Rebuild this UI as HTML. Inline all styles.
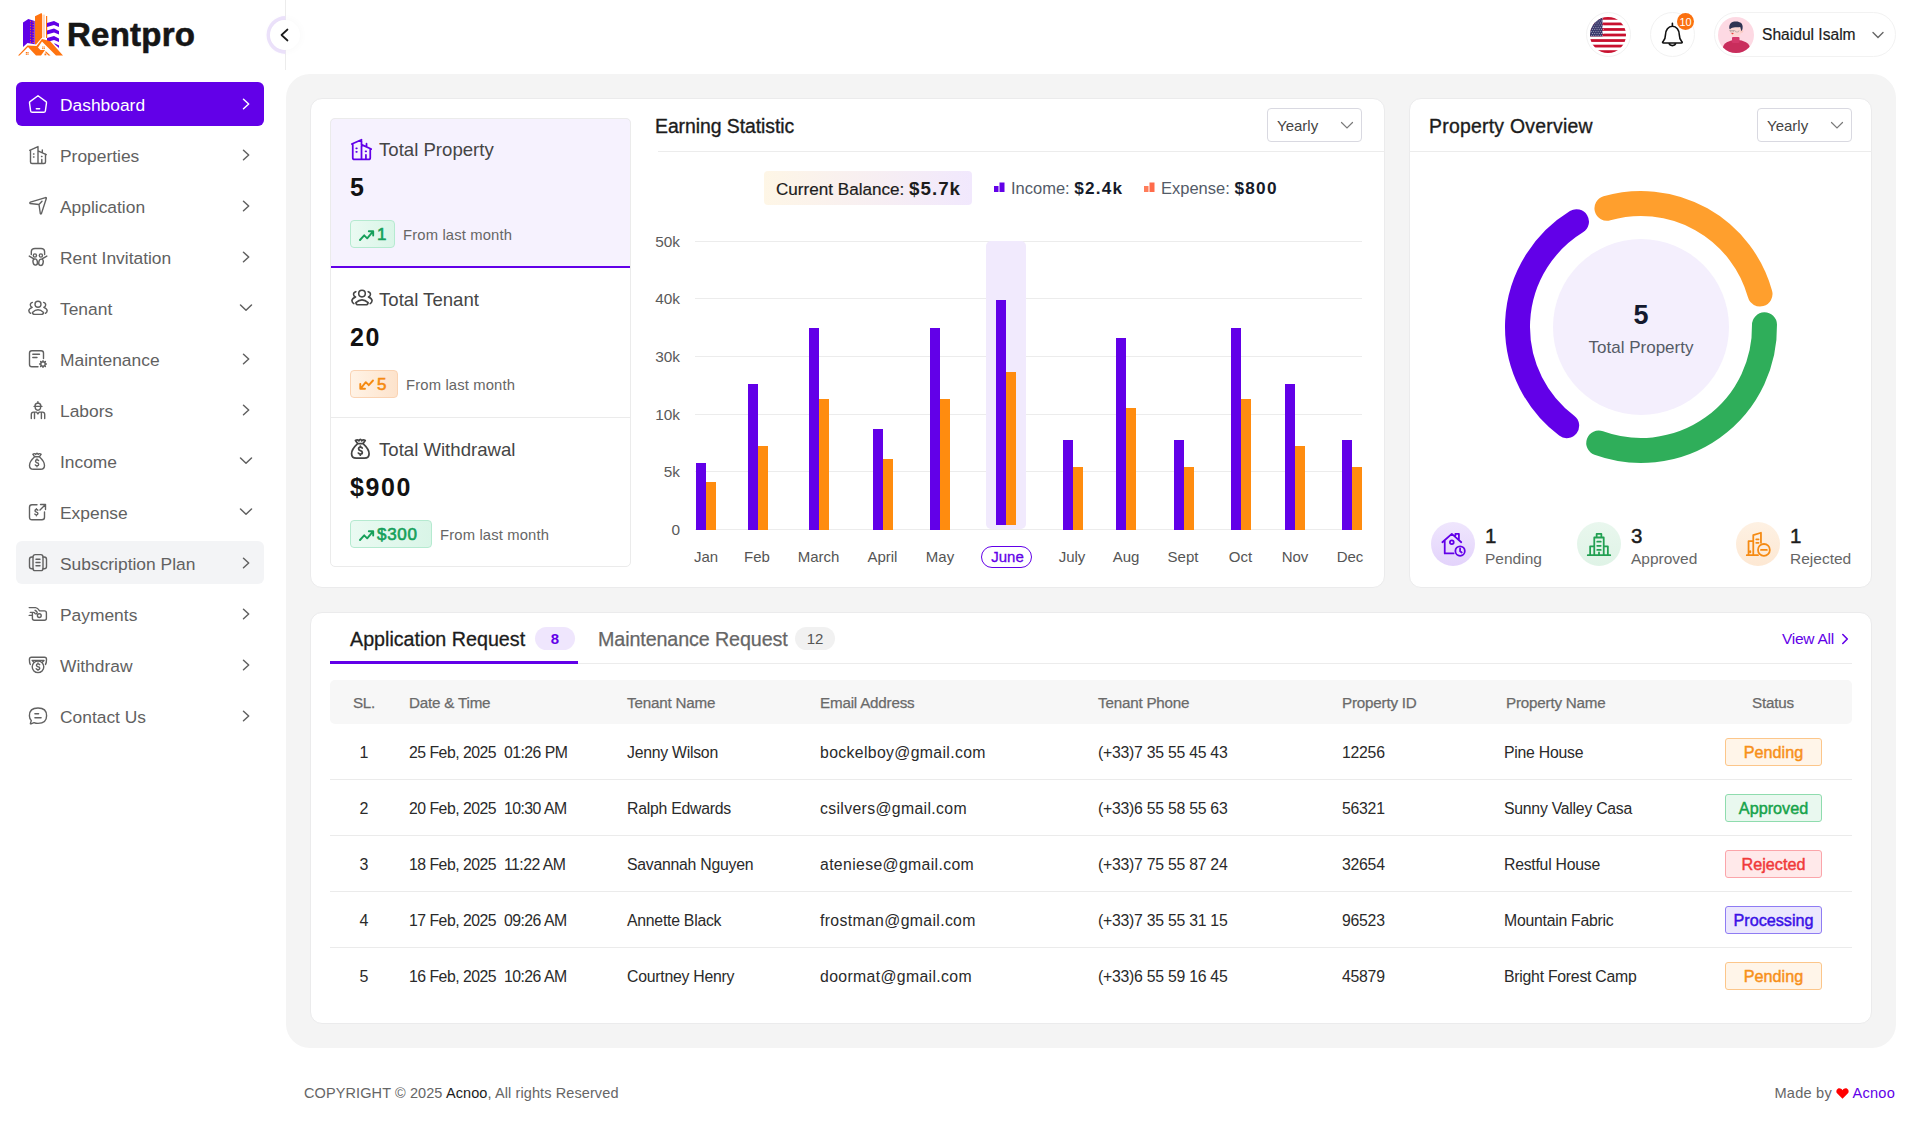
<!DOCTYPE html>
<html><head><meta charset="utf-8">
<style>
*{box-sizing:border-box;margin:0;padding:0}
html,body{width:1920px;height:1129px;overflow:hidden;background:#fff;font-family:"Liberation Sans",sans-serif;color:#1c1c1c;position:relative}
.a{position:absolute}
svg{display:block;overflow:visible}
</style></head><body>

<svg class="a" style="left:10px;top:5px;" width="60" height="60" viewBox="0 0 60 60">
  <polygon fill="#6000e6" points="13,17.5 18.3,14.1 24.7,15.9 24.7,39.3 17.5,38 13,42"/>
  <polygon fill="#ff7410" points="25,11.3 31.5,8 32,8.5 32,32.5 26,39.5 25,39.3"/>
  <rect fill="#ffd8bd" x="32.3" y="9.6" width="2.6" height="23"/>
  <rect fill="#ff7410" x="36" y="11" width="1.2" height="22"/>
  <polygon fill="#6000e6" points="37,18 44,16 49,18.5 49,22 44,20 37,22"/>
  <polygon fill="#6000e6" points="37,25.5 44,23.5 49,26 49,29.5 44,27.5 37,29.5"/>
  <polygon fill="#6000e6" points="37,33 44,31 49,33.5 49,37 44,35 37,37"/>
  <polygon fill="#6000e6" points="44,38 49,40.5 49,43 45,39.5"/>
  <polygon fill="#ff7410" points="8,50.5 17.5,40.5 26.5,41 32,34 40,36 53,50.5 46,50.5 32,36.5 28,42.5 30.5,45 35,45 31,50.5 26,50.5 18,42 9.5,50.5"/>
  <polygon fill="#ff7410" points="35.5,46 40.5,50.5 38.5,50.5 35.5,47.5"/>
  <circle cx="20.5" cy="16.50" r="0.55" fill="#ff7410"/><rect x="22.6" y="16.60" width="1.4" height="0.9" fill="#ff7410"/><circle cx="20.5" cy="19.05" r="0.55" fill="#ff7410"/><rect x="22.6" y="19.15" width="1.4" height="0.9" fill="#ff7410"/><circle cx="20.5" cy="21.60" r="0.55" fill="#ff7410"/><rect x="22.6" y="21.70" width="1.4" height="0.9" fill="#ff7410"/><circle cx="20.5" cy="24.15" r="0.55" fill="#ff7410"/><rect x="22.6" y="24.25" width="1.4" height="0.9" fill="#ff7410"/><circle cx="20.5" cy="26.70" r="0.55" fill="#ff7410"/><rect x="22.6" y="26.80" width="1.4" height="0.9" fill="#ff7410"/><circle cx="20.5" cy="29.25" r="0.55" fill="#ff7410"/><rect x="22.6" y="29.35" width="1.4" height="0.9" fill="#ff7410"/><circle cx="20.5" cy="31.80" r="0.55" fill="#ff7410"/><rect x="22.6" y="31.90" width="1.4" height="0.9" fill="#ff7410"/><circle cx="20.5" cy="34.35" r="0.55" fill="#ff7410"/><rect x="22.6" y="34.45" width="1.4" height="0.9" fill="#ff7410"/><circle cx="20.5" cy="36.90" r="0.55" fill="#ff7410"/><rect x="22.6" y="37.00" width="1.4" height="0.9" fill="#ff7410"/>
  <g fill="#ff7410"><rect x="15.8" y="47" width="1.2" height="1.2"/><rect x="17.4" y="47" width="1.2" height="1.2"/><rect x="15.8" y="48.6" width="1.2" height="1.2"/><rect x="17.4" y="48.6" width="1.2" height="1.2"/>
  <rect x="32.2" y="41.5" width="1.1" height="1.1"/><rect x="33.7" y="41.5" width="1.1" height="1.1"/><rect x="32.2" y="43" width="1.1" height="1.1"/><rect x="33.7" y="43" width="1.1" height="1.1"/>
  <rect x="34.5" y="48.5" width="1.8" height="1.8"/></g>
</svg>
<div class="a" style="left:67px;top:15.0px;line-height:40px;font-size:33px;color:#161616;font-weight:bold;white-space:nowrap;letter-spacing:0.25px;-webkit-text-stroke:0.6px #161616">Rentpro</div>
<div class="a" style="left:285px;top:0px;width:1px;height:70px;background:#ececec"></div>
<svg class="a" style="left:260px;top:10px;" width="50" height="50" viewBox="0 0 50 50"><path d="M25.5 6 A19 19 0 0 0 25.5 44 V40 A15 15 0 0 1 25.5 10 Z" fill="#ede3fc"/></svg>
<div class="a" style="left:270px;top:20px;width:30px;height:30px;border-radius:50%;background:#fff;box-shadow:0 0 10px rgba(0,0,0,0.035)"></div>
<svg class="a" style="left:277px;top:27px;" width="16" height="16" viewBox="0 0 16 16"><path d="M10.5 2.5 L4.5 8 L10.5 13.5" fill="none" stroke="#1a1a1a" stroke-width="1.7" stroke-linecap="round" stroke-linejoin="round"/></svg>
<div class="a" style="left:16px;top:82px;width:248px;height:44px;background:#6200e8;border-radius:6px"></div>
<svg class="a" style="left:29px;top:95px;" width="18" height="18" viewBox="0 0 18 18"><g fill="none" stroke="#fff" stroke-width="1.4" stroke-linecap="round" stroke-linejoin="round"><path d="M9 0.8 L17 6.6 Q17.6 7.1 17.5 7.8 L16.4 15.8 Q16.2 17.3 14.7 17.3 H3.3 Q1.8 17.3 1.6 15.8 L0.5 7.8 Q0.4 7.1 1 6.6 Z M7.3 13.8 H10.7"/></g></svg>
<div class="a" style="left:60px;top:92.5px;line-height:24px;font-size:17.4px;color:#fff;font-weight:normal;white-space:nowrap;letter-spacing:0px">Dashboard</div>
<svg class="a" style="left:240px;top:97px;" width="12" height="14" viewBox="0 0 12 14"><path d="M3.5 2.3 L8.7 7 L3.5 11.7" fill="none" stroke="#fff" stroke-width="1.5" stroke-linecap="round" stroke-linejoin="round"/></svg>
<svg class="a" style="left:29px;top:146px;" width="18" height="18" viewBox="0 0 18 18"><g fill="none" stroke="#616161" stroke-width="1.4" stroke-linecap="round" stroke-linejoin="round"><path d="M0.7 4.3 L9 0.6 M1.5 4.2 V16 Q1.5 17.5 3 17.5 H15 Q16.5 17.5 16.5 16 V8.2 M9 1.2 V17.5 M9 4.8 L17.3 8.6 M13.3 4 V6.4 M4.5 8 H5 M4.5 11 H5 M12.5 10.5 H13 M12.8 13.5 V17.5"/></g></svg>
<div class="a" style="left:60px;top:143.5px;line-height:24px;font-size:17.4px;color:#616161;font-weight:normal;white-space:nowrap;letter-spacing:0px">Properties</div>
<svg class="a" style="left:240px;top:148px;" width="12" height="14" viewBox="0 0 12 14"><path d="M3.5 2.3 L8.7 7 L3.5 11.7" fill="none" stroke="#616161" stroke-width="1.5" stroke-linecap="round" stroke-linejoin="round"/></svg>
<svg class="a" style="left:29px;top:197px;" width="18" height="18" viewBox="0 0 18 18"><g fill="none" stroke="#616161" stroke-width="1.4" stroke-linecap="round" stroke-linejoin="round"><path d="M1 6.5 Q0.5 5.6 1.4 5.2 L16.5 0.6 Q17.6 0.4 17.3 1.5 L12.5 16.4 Q12 17.4 11.3 16.5 L10 7.5 Z M10 7.5 L13 4.3"/></g></svg>
<div class="a" style="left:60px;top:194.5px;line-height:24px;font-size:17.4px;color:#616161;font-weight:normal;white-space:nowrap;letter-spacing:0px">Application</div>
<svg class="a" style="left:240px;top:199px;" width="12" height="14" viewBox="0 0 12 14"><path d="M3.5 2.3 L8.7 7 L3.5 11.7" fill="none" stroke="#616161" stroke-width="1.5" stroke-linecap="round" stroke-linejoin="round"/></svg>
<svg class="a" style="left:29px;top:248px;" width="18" height="18" viewBox="0 0 18 18"><g fill="none" stroke="#616161" stroke-width="1.4" stroke-linecap="round" stroke-linejoin="round"><path d="M2.3 6.6 V3.6 Q2.5 0.5 6 0.5 H12 Q15.4 0.5 15.6 3.6 V6.6 M0.3 8.1 L4.4 10.7 M17.8 8.1 L13.5 10.6"/><circle cx="5.9" cy="7.5" r="1.6"/><circle cx="11.9" cy="7.5" r="1.6"/><ellipse cx="6.2" cy="14" rx="2.2" ry="3.1" transform="rotate(-12 6.2 14)"/><ellipse cx="12" cy="14.3" rx="2.2" ry="3.2" transform="rotate(12 12 14.3)"/></g></svg>
<div class="a" style="left:60px;top:245.5px;line-height:24px;font-size:17.4px;color:#616161;font-weight:normal;white-space:nowrap;letter-spacing:0px">Rent Invitation</div>
<svg class="a" style="left:240px;top:250px;" width="12" height="14" viewBox="0 0 12 14"><path d="M3.5 2.3 L8.7 7 L3.5 11.7" fill="none" stroke="#616161" stroke-width="1.5" stroke-linecap="round" stroke-linejoin="round"/></svg>
<svg class="a" style="left:28px;top:299px;" width="20" height="18" viewBox="0 0 20 18"><g fill="none" stroke="#616161" stroke-width="1.4" stroke-linecap="round" stroke-linejoin="round"><circle cx="10" cy="5.2" r="3"/><path d="M4.4 13.4 Q10 8.3 15.6 13.4 Q15.4 15.4 13.4 15.4 H6.6 Q4.6 15.4 4.4 13.4 Z M4.4 3.4 Q2.2 4 2.3 6 Q2.4 7.6 4.2 8.3 Q1 9.6 0.8 11.6 Q1 13.4 2.6 14.3 M15.6 3.4 Q17.8 4 17.7 6 Q17.6 7.6 15.8 8.3 Q19 9.6 19.2 11.6 Q19 13.4 17.4 14.3"/></g></svg>
<div class="a" style="left:60px;top:296.5px;line-height:24px;font-size:17.4px;color:#616161;font-weight:normal;white-space:nowrap;letter-spacing:0px">Tenant</div>
<svg class="a" style="left:239px;top:301px;" width="14" height="14" viewBox="0 0 14 14"><path d="M1.5 4 L7 9.3 L12.5 4" fill="none" stroke="#616161" stroke-width="1.5" stroke-linecap="round" stroke-linejoin="round"/></svg>
<svg class="a" style="left:29px;top:350px;" width="18" height="18" viewBox="0 0 18 18"><g fill="none" stroke="#616161" stroke-width="1.4" stroke-linecap="round" stroke-linejoin="round"><path d="M14.5 8.5 V3 Q14.5 0.7 12.2 0.7 H2.8 Q0.5 0.7 0.5 3 V14.5 Q0.5 16.8 2.8 16.8 H9 M3.8 4.3 H10.5 M3.8 7.5 H8"/><circle cx="14" cy="14" r="2.2"/><path d="M14 10.6 V11.5 M14 16.5 V17.4 M10.6 14 H11.5 M16.5 14 H17.4 M11.6 11.6 L12.2 12.2 M15.8 15.8 L16.4 16.4 M16.4 11.6 L15.8 12.2 M12.2 15.8 L11.6 16.4"/></g></svg>
<div class="a" style="left:60px;top:347.5px;line-height:24px;font-size:17.4px;color:#616161;font-weight:normal;white-space:nowrap;letter-spacing:0px">Maintenance</div>
<svg class="a" style="left:240px;top:352px;" width="12" height="14" viewBox="0 0 12 14"><path d="M3.5 2.3 L8.7 7 L3.5 11.7" fill="none" stroke="#616161" stroke-width="1.5" stroke-linecap="round" stroke-linejoin="round"/></svg>
<svg class="a" style="left:29px;top:401px;" width="18" height="18" viewBox="0 0 18 18"><g fill="none" stroke="#616161" stroke-width="1.4" stroke-linecap="round" stroke-linejoin="round"><path d="M5.1 5.4 H12.9 M6 5.4 Q5.8 2.3 8.9 2 Q12 2.3 11.8 5.4 M8.9 0.6 V2 M6.1 5.6 Q6.2 9.3 8.9 9.3 Q11.6 9.3 11.7 5.6 M2.3 17.6 V13.3 Q2.3 11.1 4.5 11.1 H7.6 L8.9 12.9 L10.2 11.1 H13.5 Q15.7 11.1 15.7 13.3 V17.6 M5.5 11.1 V17.6 M12.4 11.1 V17.6"/></g></svg>
<div class="a" style="left:60px;top:398.5px;line-height:24px;font-size:17.4px;color:#616161;font-weight:normal;white-space:nowrap;letter-spacing:0px">Labors</div>
<svg class="a" style="left:240px;top:403px;" width="12" height="14" viewBox="0 0 12 14"><path d="M3.5 2.3 L8.7 7 L3.5 11.7" fill="none" stroke="#616161" stroke-width="1.5" stroke-linecap="round" stroke-linejoin="round"/></svg>
<svg class="a" style="left:29px;top:452px;" width="18" height="18" viewBox="0 0 18 18"><g fill="none" stroke="#616161" stroke-width="1.4" stroke-linecap="round" stroke-linejoin="round"><path d="M5.7 4.8 L3.8 2.2 Q5.5 1 6.8 2.4 Q8 0 9.2 2.4 Q10.5 1 12.2 2.2 L10.3 4.8 Z M5.7 4.8 Q0.5 9.5 0.5 13.5 Q0.5 17.3 4.5 17.3 H11.5 Q15.5 17.3 15.5 13.5 Q15.5 9.5 10.3 4.8 M9.6 8.6 Q9 7.8 8 7.8 Q6.5 7.8 6.5 9.3 Q6.5 10.4 8 10.8 Q9.7 11.2 9.7 12.4 Q9.7 13.8 8 13.8 Q6.9 13.8 6.3 12.9 M8 6.9 V7.8 M8 13.8 V14.7"/></g></svg>
<div class="a" style="left:60px;top:449.5px;line-height:24px;font-size:17.4px;color:#616161;font-weight:normal;white-space:nowrap;letter-spacing:0px">Income</div>
<svg class="a" style="left:239px;top:454px;" width="14" height="14" viewBox="0 0 14 14"><path d="M1.5 4 L7 9.3 L12.5 4" fill="none" stroke="#616161" stroke-width="1.5" stroke-linecap="round" stroke-linejoin="round"/></svg>
<svg class="a" style="left:29px;top:503px;" width="18" height="18" viewBox="0 0 18 18"><g fill="none" stroke="#616161" stroke-width="1.4" stroke-linecap="round" stroke-linejoin="round"><path d="M15.5 9 V14.3 Q15.5 16.8 13 16.8 H3 Q0.5 16.8 0.5 14.3 V4.2 Q0.5 1.7 3 1.7 H8 M11.5 1.5 H16.5 V6.5 M16.5 1.5 L11 7 M8.8 7.2 Q8.3 6.5 7.4 6.5 Q6 6.5 6 7.8 Q6 8.8 7.4 9.1 Q8.9 9.5 8.9 10.6 Q8.9 11.9 7.4 11.9 Q6.4 11.9 5.9 11.1 M7.4 5.6 V6.5 M7.4 11.9 V12.8"/></g></svg>
<div class="a" style="left:60px;top:500.5px;line-height:24px;font-size:17.4px;color:#616161;font-weight:normal;white-space:nowrap;letter-spacing:0px">Expense</div>
<svg class="a" style="left:239px;top:505px;" width="14" height="14" viewBox="0 0 14 14"><path d="M1.5 4 L7 9.3 L12.5 4" fill="none" stroke="#616161" stroke-width="1.5" stroke-linecap="round" stroke-linejoin="round"/></svg>
<div class="a" style="left:16px;top:540.5px;width:248px;height:43.5px;background:#f3f4f6;border-radius:6px"></div>
<svg class="a" style="left:29px;top:554px;" width="18" height="18" viewBox="0 0 18 18"><g fill="none" stroke="#616161" stroke-width="1.4" stroke-linecap="round" stroke-linejoin="round"><rect x="4" y="0.6" width="10" height="16" rx="2.2"/><path d="M4 3 H2.8 Q0.5 3 0.5 5.3 V12.5 Q0.5 14.7 2.8 14.7 H4 M14 3 H15.2 Q17.5 3 17.5 5.3 V12.5 Q17.5 14.7 15.2 14.7 H14 M7 5.2 H11 M7 8.5 H11 M7 11.8 H11"/></g></svg>
<div class="a" style="left:60px;top:551.5px;line-height:24px;font-size:17.4px;color:#616161;font-weight:normal;white-space:nowrap;letter-spacing:0px">Subscription Plan</div>
<svg class="a" style="left:240px;top:556px;" width="12" height="14" viewBox="0 0 12 14"><path d="M3.5 2.3 L8.7 7 L3.5 11.7" fill="none" stroke="#616161" stroke-width="1.5" stroke-linecap="round" stroke-linejoin="round"/></svg>
<svg class="a" style="left:29px;top:605px;" width="18" height="18" viewBox="0 0 18 18"><g fill="none" stroke="#616161" stroke-width="1.4" stroke-linecap="round" stroke-linejoin="round"><path d="M0.2 2.6 H6.6 Q8.6 2.6 10.6 5.9 H15.4 Q17.4 5.9 17.4 7.9 V13.3 Q17.4 15.3 15.4 15.3 H5.4 Q3.4 15.3 3.4 13.3 V8.2 M1.3 7.4 H4.2 Q5.2 7.2 6 8.4 Q7 9.4 8 8.2 Q8.8 6.8 6.1 5.3 M0.2 10.4 H3.2"/><circle cx="10.3" cy="10.6" r="1.9"/></g></svg>
<div class="a" style="left:60px;top:602.5px;line-height:24px;font-size:17.4px;color:#616161;font-weight:normal;white-space:nowrap;letter-spacing:0px">Payments</div>
<svg class="a" style="left:240px;top:607px;" width="12" height="14" viewBox="0 0 12 14"><path d="M3.5 2.3 L8.7 7 L3.5 11.7" fill="none" stroke="#616161" stroke-width="1.5" stroke-linecap="round" stroke-linejoin="round"/></svg>
<svg class="a" style="left:29px;top:656px;" width="18" height="18" viewBox="0 0 18 18"><g fill="none" stroke="#616161" stroke-width="1.4" stroke-linecap="round" stroke-linejoin="round"><path d="M1.3 8.5 Q0.4 7 0.4 3.4 Q0.4 1.3 2.5 1.3 H15.5 Q17.5 1.3 17.5 3.4 Q17.5 7 16.5 8.5 M3.2 4.4 H15 L13.5 6 M3.2 4.4 L4.6 6"/><circle cx="9" cy="10.8" r="5.8"/><path d="M10.7 8.7 Q10.2 7.9 9 7.9 Q7.4 7.9 7.4 9.2 Q7.4 10.3 9 10.7 Q10.8 11.1 10.8 12.3 Q10.8 13.7 9 13.7 Q7.8 13.7 7.1 12.7 M9 7 V7.9 M9 13.7 V14.6"/></g></svg>
<div class="a" style="left:60px;top:653.5px;line-height:24px;font-size:17.4px;color:#616161;font-weight:normal;white-space:nowrap;letter-spacing:0px">Withdraw</div>
<svg class="a" style="left:240px;top:658px;" width="12" height="14" viewBox="0 0 12 14"><path d="M3.5 2.3 L8.7 7 L3.5 11.7" fill="none" stroke="#616161" stroke-width="1.5" stroke-linecap="round" stroke-linejoin="round"/></svg>
<svg class="a" style="left:29px;top:707px;" width="18" height="18" viewBox="0 0 18 18"><g fill="none" stroke="#616161" stroke-width="1.4" stroke-linecap="round" stroke-linejoin="round"><path d="M5 15.6 Q6.8 16.4 9 16.4 Q17.6 16.4 17.6 8.7 Q17.6 1 9 1 Q0.4 1 0.4 8.7 Q0.4 11.4 2.3 13.6 L1.4 16.4 Q1.3 17 2 16.8 Z M5.9 6.8 H9.6 M5.9 10.8 H12.1"/></g></svg>
<div class="a" style="left:60px;top:704.5px;line-height:24px;font-size:17.4px;color:#616161;font-weight:normal;white-space:nowrap;letter-spacing:0px">Contact Us</div>
<svg class="a" style="left:240px;top:709px;" width="12" height="14" viewBox="0 0 12 14"><path d="M3.5 2.3 L8.7 7 L3.5 11.7" fill="none" stroke="#616161" stroke-width="1.5" stroke-linecap="round" stroke-linejoin="round"/></svg>
<div class="a" style="left:1586px;top:12px;width:45px;height:45px;border-radius:50%;border:1px solid #f2f2f2"></div>
<svg class="a" style="left:1590px;top:17px;" width="36" height="36" viewBox="0 0 36 36"><defs><clipPath id="fc"><circle cx="18" cy="18" r="18"/></clipPath></defs><g clip-path="url(#fc)"><rect width="36" height="36" fill="#fff"/><rect y="0.00" width="36" height="2.77" fill="#c8102e"/><rect y="5.54" width="36" height="2.77" fill="#c8102e"/><rect y="11.08" width="36" height="2.77" fill="#c8102e"/><rect y="16.62" width="36" height="2.77" fill="#c8102e"/><rect y="22.15" width="36" height="2.77" fill="#c8102e"/><rect y="27.69" width="36" height="2.77" fill="#c8102e"/><rect y="33.23" width="36" height="2.77" fill="#c8102e"/><rect width="12.5" height="19.4" fill="#3c3b6e"/><circle cx="1.5" cy="1.8" r="0.45" fill="#fff"/><circle cx="3.7" cy="1.8" r="0.45" fill="#fff"/><circle cx="5.9" cy="1.8" r="0.45" fill="#fff"/><circle cx="8.1" cy="1.8" r="0.45" fill="#fff"/><circle cx="10.3" cy="1.8" r="0.45" fill="#fff"/><circle cx="12.5" cy="1.8" r="0.45" fill="#fff"/><circle cx="2.6" cy="3.9" r="0.45" fill="#fff"/><circle cx="4.8" cy="3.9" r="0.45" fill="#fff"/><circle cx="7.0" cy="3.9" r="0.45" fill="#fff"/><circle cx="9.2" cy="3.9" r="0.45" fill="#fff"/><circle cx="11.4" cy="3.9" r="0.45" fill="#fff"/><circle cx="13.6" cy="3.9" r="0.45" fill="#fff"/><circle cx="1.5" cy="6.0" r="0.45" fill="#fff"/><circle cx="3.7" cy="6.0" r="0.45" fill="#fff"/><circle cx="5.9" cy="6.0" r="0.45" fill="#fff"/><circle cx="8.1" cy="6.0" r="0.45" fill="#fff"/><circle cx="10.3" cy="6.0" r="0.45" fill="#fff"/><circle cx="12.5" cy="6.0" r="0.45" fill="#fff"/><circle cx="2.6" cy="8.1" r="0.45" fill="#fff"/><circle cx="4.8" cy="8.1" r="0.45" fill="#fff"/><circle cx="7.0" cy="8.1" r="0.45" fill="#fff"/><circle cx="9.2" cy="8.1" r="0.45" fill="#fff"/><circle cx="11.4" cy="8.1" r="0.45" fill="#fff"/><circle cx="13.6" cy="8.1" r="0.45" fill="#fff"/><circle cx="1.5" cy="10.2" r="0.45" fill="#fff"/><circle cx="3.7" cy="10.2" r="0.45" fill="#fff"/><circle cx="5.9" cy="10.2" r="0.45" fill="#fff"/><circle cx="8.1" cy="10.2" r="0.45" fill="#fff"/><circle cx="10.3" cy="10.2" r="0.45" fill="#fff"/><circle cx="12.5" cy="10.2" r="0.45" fill="#fff"/><circle cx="2.6" cy="12.3" r="0.45" fill="#fff"/><circle cx="4.8" cy="12.3" r="0.45" fill="#fff"/><circle cx="7.0" cy="12.3" r="0.45" fill="#fff"/><circle cx="9.2" cy="12.3" r="0.45" fill="#fff"/><circle cx="11.4" cy="12.3" r="0.45" fill="#fff"/><circle cx="13.6" cy="12.3" r="0.45" fill="#fff"/><circle cx="1.5" cy="14.4" r="0.45" fill="#fff"/><circle cx="3.7" cy="14.4" r="0.45" fill="#fff"/><circle cx="5.9" cy="14.4" r="0.45" fill="#fff"/><circle cx="8.1" cy="14.4" r="0.45" fill="#fff"/><circle cx="10.3" cy="14.4" r="0.45" fill="#fff"/><circle cx="12.5" cy="14.4" r="0.45" fill="#fff"/><circle cx="2.6" cy="16.5" r="0.45" fill="#fff"/><circle cx="4.8" cy="16.5" r="0.45" fill="#fff"/><circle cx="7.0" cy="16.5" r="0.45" fill="#fff"/><circle cx="9.2" cy="16.5" r="0.45" fill="#fff"/><circle cx="11.4" cy="16.5" r="0.45" fill="#fff"/><circle cx="13.6" cy="16.5" r="0.45" fill="#fff"/><circle cx="1.5" cy="18.6" r="0.45" fill="#fff"/><circle cx="3.7" cy="18.6" r="0.45" fill="#fff"/><circle cx="5.9" cy="18.6" r="0.45" fill="#fff"/><circle cx="8.1" cy="18.6" r="0.45" fill="#fff"/><circle cx="10.3" cy="18.6" r="0.45" fill="#fff"/><circle cx="12.5" cy="18.6" r="0.45" fill="#fff"/></g></svg>
<div class="a" style="left:1650px;top:12px;width:45px;height:45px;border-radius:50%;border:1px solid #f2f2f2"></div>
<svg class="a" style="left:1660px;top:22px;" width="25" height="26" viewBox="0 0 25 26"><path d="M12.4 1.2 V4.2 M5.4 13.3 C5.4 7.9 8.5 4.3 12.4 4.3 C16.3 4.3 19.4 7.9 19.4 13.3 C19.4 16.4 20 17.8 21.6 19.3 C22.7 20.3 22.3 21 21.2 21 H3.6 C2.5 21 2.1 20.3 3.2 19.3 C4.8 17.8 5.4 16.4 5.4 13.3 Z M9 21.2 C9.6 24.4 15.2 24.4 15.8 21.2" fill="none" stroke="#111" stroke-width="1.6" stroke-linejoin="round" stroke-linecap="round"/></svg>
<div class="a" style="left:1677px;top:13px;width:17px;height:17px;border-radius:50%;background:#fb7010"></div>
<div class="a" style="left:1676.5px;top:12.5px;width:18px;text-align:center;line-height:18px;font-size:11px;color:#fff;font-weight:normal;white-space:nowrap;">10</div>
<div class="a" style="left:1714px;top:12px;width:182px;height:45px;border-radius:23px;border:1px solid #f2f2f2"></div>
<svg class="a" style="left:1718px;top:17px;" width="36" height="36" viewBox="0 0 36 36"><defs><clipPath id="ac"><circle cx="18" cy="18" r="18"/></clipPath></defs><g clip-path="url(#ac)">
<rect width="36" height="36" fill="#fdd9e3"/>
<ellipse cx="18.4" cy="31.5" rx="13.6" ry="8.8" fill="#c92d5c"/>
<rect x="14" y="20" width="7.5" height="6" rx="1" fill="#d4386a"/>
<ellipse cx="17.6" cy="13.2" rx="6.2" ry="6.8" fill="#fcd6d2"/>
<circle cx="23.6" cy="14.2" r="1.6" fill="#f9c9c2"/>
<path d="M11.3 11.5 C10.8 6.2 14 4.5 18 4.5 C22.2 4.5 25.3 6.6 24.6 11.2 C24.4 12.8 24 13.6 23.3 14 L22.2 10 C19 10.6 15 9.5 12 12.2 Z" fill="#2f3352"/>
<path d="M11.5 13.5 H16.5 M12 13.5 a2 1.6 0 1 0 4 0 M17 13.5 a2 1.6 0 1 0 4 0" fill="none" stroke="#8a8a8a" stroke-width="0.5"/>
<ellipse cx="14.5" cy="16.6" rx="1.2" ry="0.6" fill="#e33"/>
</g></svg>
<div class="a" style="left:1762px;top:23.0px;line-height:24px;font-size:15.6px;color:#1c1c1c;font-weight:normal;white-space:nowrap;-webkit-text-stroke:0.2px #1c1c1c">Shaidul Isalm</div>
<svg class="a" style="left:1871px;top:29px;" width="14" height="12" viewBox="0 0 14 12"><path d="M2 3.5 L7 8.5 L12 3.5" fill="none" stroke="#666" stroke-width="1.4" stroke-linecap="round"/></svg>
<div class="a" style="left:286px;top:74px;width:1610px;height:974px;background:#f4f4f4;border-radius:24px"></div>
<div class="a" style="left:310px;top:98px;width:1075px;height:490px;background:#fff;border-radius:12px;border:1px solid #ebebec"></div>
<div class="a" style="left:1409px;top:98px;width:463px;height:490px;background:#fff;border-radius:12px;border:1px solid #ebebec"></div>
<div class="a" style="left:310px;top:612px;width:1562px;height:412px;background:#fff;border-radius:12px;border:1px solid #ebebec"></div>
<div class="a" style="left:330px;top:118px;width:301px;height:150px;background:#f6f2fe;border-radius:5px 5px 0 0;border-bottom:2px solid #6200e8"></div>
<div class="a" style="left:330px;top:118px;width:301px;height:449px;border:1px solid #ebebeb;border-radius:5px"></div>
<div class="a" style="left:331px;top:417px;width:299px;height:1px;background:#ebebeb"></div>
<svg class="a" style="left:351px;top:138.5px;" width="21" height="21" viewBox="0 0 18 18"><g fill="none" stroke="#6200e8" stroke-width="1.5" stroke-linecap="round" stroke-linejoin="round"><path d="M0.7 4.3 L9 0.6 M1.5 4.2 V16 Q1.5 17.5 3 17.5 H15 Q16.5 17.5 16.5 16 V8.2 M9 1.2 V17.5 M9 4.8 L17.3 8.6 M13.3 4 V6.4 M4.5 8 H5 M4.5 11 H5 M12.5 10.5 H13 M12.8 13.5 V17.5"/></g></svg>
<div class="a" style="left:379px;top:137.5px;line-height:24px;font-size:18.6px;color:#454545;font-weight:normal;white-space:nowrap;">Total Property</div>
<div class="a" style="left:350px;top:172.0px;line-height:30px;font-size:25px;color:#121212;font-weight:bold;white-space:nowrap;letter-spacing:1.6px">5</div>
<div class="a" style="left:350px;top:220px;width:45px;height:28px;border:1px solid #b5ead0;border-radius:4px;background:linear-gradient(90deg,#eafaf2,#d9f5e7)"></div>
<svg class="a" style="left:359px;top:229px;" width="16" height="12" viewBox="0 0 16 12"><path d="M1 11 L5.2 6.3 L8.2 9.3 L13.8 2.7 M9.8 2.2 H14.2 V6.6" fill="none" stroke="#16a05a" stroke-width="1.9" stroke-linecap="round" stroke-linejoin="round"/></svg>
<div class="a" style="left:377px;top:222.5px;line-height:24px;font-size:17px;color:#16a05a;font-weight:normal;white-space:nowrap;-webkit-text-stroke:0.6px #16a05a;letter-spacing:0.7px">1</div>
<div class="a" style="left:403px;top:222.5px;line-height:24px;font-size:14.8px;color:#666;font-weight:normal;white-space:nowrap;letter-spacing:0.15px">From last month</div>
<svg class="a" style="left:350.8px;top:289px;" width="22" height="17.6" viewBox="0 1 20 16"><g fill="none" stroke="#444" stroke-width="1.4" stroke-linecap="round" stroke-linejoin="round"><circle cx="10" cy="5.2" r="3"/><path d="M4.4 13.4 Q10 8.3 15.6 13.4 Q15.4 15.4 13.4 15.4 H6.6 Q4.6 15.4 4.4 13.4 Z M4.4 3.4 Q2.2 4 2.3 6 Q2.4 7.6 4.2 8.3 Q1 9.6 0.8 11.6 Q1 13.4 2.6 14.3 M15.6 3.4 Q17.8 4 17.7 6 Q17.6 7.6 15.8 8.3 Q19 9.6 19.2 11.6 Q19 13.4 17.4 14.3"/></g></svg>
<div class="a" style="left:379px;top:287.5px;line-height:24px;font-size:18.6px;color:#454545;font-weight:normal;white-space:nowrap;">Total Tenant</div>
<div class="a" style="left:350px;top:322.0px;line-height:30px;font-size:25px;color:#121212;font-weight:bold;white-space:nowrap;letter-spacing:1.6px">20</div>
<div class="a" style="left:350px;top:370px;width:48px;height:28px;border:1px solid #fad3b3;border-radius:4px;background:linear-gradient(90deg,#fff3e6,#fde3cc)"></div>
<svg class="a" style="left:359px;top:379px;" width="16" height="12" viewBox="0 0 16 12"><path d="M14 1.5 L9.8 6.2 L6.8 3.2 L1.8 9.3 M1.3 5 V9.8 H6" fill="none" stroke="#f58a12" stroke-width="1.9" stroke-linecap="round" stroke-linejoin="round"/></svg>
<div class="a" style="left:377px;top:372.5px;line-height:24px;font-size:17px;color:#f58a12;font-weight:normal;white-space:nowrap;-webkit-text-stroke:0.6px #f58a12;letter-spacing:0.7px">5</div>
<div class="a" style="left:406px;top:372.5px;line-height:24px;font-size:14.8px;color:#666;font-weight:normal;white-space:nowrap;letter-spacing:0.15px">From last month</div>
<svg class="a" style="left:351px;top:438px;" width="21" height="21" viewBox="0 0 18 18"><g fill="none" stroke="#444" stroke-width="1.5" stroke-linecap="round" stroke-linejoin="round"><path d="M5.7 4.8 L3.8 2.2 Q5.5 1 6.8 2.4 Q8 0 9.2 2.4 Q10.5 1 12.2 2.2 L10.3 4.8 Z M5.7 4.8 Q0.5 9.5 0.5 13.5 Q0.5 17.3 4.5 17.3 H11.5 Q15.5 17.3 15.5 13.5 Q15.5 9.5 10.3 4.8 M9.6 8.6 Q9 7.8 8 7.8 Q6.5 7.8 6.5 9.3 Q6.5 10.4 8 10.8 Q9.7 11.2 9.7 12.4 Q9.7 13.8 8 13.8 Q6.9 13.8 6.3 12.9 M8 6.9 V7.8 M8 13.8 V14.7"/></g></svg>
<div class="a" style="left:379px;top:437.5px;line-height:24px;font-size:18.6px;color:#454545;font-weight:normal;white-space:nowrap;">Total Withdrawal</div>
<div class="a" style="left:350px;top:472.0px;line-height:30px;font-size:25px;color:#121212;font-weight:bold;white-space:nowrap;letter-spacing:1.6px">$900</div>
<div class="a" style="left:350px;top:520px;width:82px;height:28px;border:1px solid #b5ead0;border-radius:4px;background:linear-gradient(90deg,#eafaf2,#d9f5e7)"></div>
<svg class="a" style="left:359px;top:529px;" width="16" height="12" viewBox="0 0 16 12"><path d="M1 11 L5.2 6.3 L8.2 9.3 L13.8 2.7 M9.8 2.2 H14.2 V6.6" fill="none" stroke="#16a05a" stroke-width="1.9" stroke-linecap="round" stroke-linejoin="round"/></svg>
<div class="a" style="left:377px;top:522.5px;line-height:24px;font-size:17px;color:#16a05a;font-weight:normal;white-space:nowrap;-webkit-text-stroke:0.6px #16a05a;letter-spacing:0.7px">$300</div>
<div class="a" style="left:440px;top:522.5px;line-height:24px;font-size:14.8px;color:#666;font-weight:normal;white-space:nowrap;letter-spacing:0.15px">From last month</div>
<div class="a" style="left:655px;top:113.5px;line-height:24px;font-size:19.4px;color:#1c1c1c;font-weight:normal;white-space:nowrap;-webkit-text-stroke:0.35px #1c1c1c;letter-spacing:-0.05px">Earning Statistic</div>
<div class="a" style="left:1267px;top:108px;width:95px;height:34px;border:1px solid #d9d9e1;border-radius:4px"></div>
<div class="a" style="left:1277px;top:113.5px;line-height:24px;font-size:15px;color:#444;font-weight:normal;white-space:nowrap;">Yearly</div>
<svg class="a" style="left:1339.5px;top:119px;" width="14" height="12" viewBox="0 0 14 12"><path d="M1.5 3.5 L7 9 L12.5 3.5" fill="none" stroke="#7a7a7a" stroke-width="1.2" stroke-linecap="round"/></svg>
<div class="a" style="left:658px;top:151px;width:727px;height:1px;background:#ececec"></div>
<div class="a" style="left:764px;top:171px;width:208px;height:34px;border-radius:4px;background:linear-gradient(90deg,#fef6e6,#f1e8fd)"></div>
<div class="a" style="left:776px;top:176.5px;line-height:24px;font-size:17.1px;color:#1c1c1c;white-space:nowrap;-webkit-text-stroke:0.2px #1c1c1c">Current Balance: <span style="font-weight:bold;font-size:18.8px;letter-spacing:1px;-webkit-text-stroke:0">$5.7k</span></div>
<svg class="a" style="left:994px;top:182px;" width="11" height="11" viewBox="0 0 11 11"><rect x="0" y="4" width="4.5" height="6" fill="#6200e8"/><rect x="5.5" y="0.5" width="5" height="9.5" fill="#6200e8"/></svg>
<div class="a" style="left:1011px;top:176px;line-height:24px;font-size:16.5px;color:#535b68;white-space:nowrap">Income: <span style="font-weight:bold;color:#161b2a;letter-spacing:1.2px;font-size:17.2px">$2.4k</span></div>
<svg class="a" style="left:1144px;top:182px;" width="11" height="11" viewBox="0 0 11 11"><rect x="0" y="4" width="4.5" height="6" fill="#ff7d5a"/><rect x="5.5" y="0.5" width="5" height="9.5" fill="#ff6b4a"/></svg>
<div class="a" style="left:1161px;top:176px;line-height:24px;font-size:16.5px;color:#535b68;white-space:nowrap">Expense: <span style="font-weight:bold;color:#161b2a;letter-spacing:1.3px;font-size:17.2px">$800</span></div>
<div class="a" style="left:695px;top:241px;width:667px;height:1px;background:#ececec"></div>
<div class="a" style="left:620px;top:231.5px;width:60px;text-align:right;line-height:20px;font-size:15.4px;color:#5a5a5a;font-weight:normal;white-space:nowrap;">50k</div>
<div class="a" style="left:695px;top:298px;width:667px;height:1px;background:#ececec"></div>
<div class="a" style="left:620px;top:288.5px;width:60px;text-align:right;line-height:20px;font-size:15.4px;color:#5a5a5a;font-weight:normal;white-space:nowrap;">40k</div>
<div class="a" style="left:695px;top:356px;width:667px;height:1px;background:#ececec"></div>
<div class="a" style="left:620px;top:346.5px;width:60px;text-align:right;line-height:20px;font-size:15.4px;color:#5a5a5a;font-weight:normal;white-space:nowrap;">30k</div>
<div class="a" style="left:695px;top:414px;width:667px;height:1px;background:#ececec"></div>
<div class="a" style="left:620px;top:404.5px;width:60px;text-align:right;line-height:20px;font-size:15.4px;color:#5a5a5a;font-weight:normal;white-space:nowrap;">10k</div>
<div class="a" style="left:695px;top:471px;width:667px;height:1px;background:#ececec"></div>
<div class="a" style="left:620px;top:461.5px;width:60px;text-align:right;line-height:20px;font-size:15.4px;color:#5a5a5a;font-weight:normal;white-space:nowrap;">5k</div>
<div class="a" style="left:695px;top:529px;width:667px;height:1px;background:#ececec"></div>
<div class="a" style="left:620px;top:519.5px;width:60px;text-align:right;line-height:20px;font-size:15.4px;color:#5a5a5a;font-weight:normal;white-space:nowrap;">0</div>
<div class="a" style="left:986px;top:241px;width:40px;height:288px;background:#f1eafd;border-radius:5px"></div>
<div class="a" style="left:696px;top:463px;width:10px;height:66.5px;background:#6200e8"></div>
<div class="a" style="left:706px;top:482px;width:10px;height:47.5px;background:#ff8c0f"></div>
<div class="a" style="left:676.0px;top:546.5px;width:60px;text-align:center;line-height:20px;font-size:15px;color:#555;font-weight:normal;white-space:nowrap;">Jan</div>
<div class="a" style="left:748px;top:384px;width:10px;height:145.5px;background:#6200e8"></div>
<div class="a" style="left:758px;top:446px;width:10px;height:83.5px;background:#ff8c0f"></div>
<div class="a" style="left:727.0px;top:546.5px;width:60px;text-align:center;line-height:20px;font-size:15px;color:#555;font-weight:normal;white-space:nowrap;">Feb</div>
<div class="a" style="left:809px;top:328px;width:10px;height:201.5px;background:#6200e8"></div>
<div class="a" style="left:819px;top:399px;width:10px;height:130.5px;background:#ff8c0f"></div>
<div class="a" style="left:788.6px;top:546.5px;width:60px;text-align:center;line-height:20px;font-size:15px;color:#555;font-weight:normal;white-space:nowrap;">March</div>
<div class="a" style="left:873px;top:429px;width:10px;height:100.5px;background:#6200e8"></div>
<div class="a" style="left:883px;top:459px;width:10px;height:70.5px;background:#ff8c0f"></div>
<div class="a" style="left:852.4px;top:546.5px;width:60px;text-align:center;line-height:20px;font-size:15px;color:#555;font-weight:normal;white-space:nowrap;">April</div>
<div class="a" style="left:930px;top:328px;width:10px;height:201.5px;background:#6200e8"></div>
<div class="a" style="left:940px;top:399px;width:10px;height:130.5px;background:#ff8c0f"></div>
<div class="a" style="left:910.0px;top:546.5px;width:60px;text-align:center;line-height:20px;font-size:15px;color:#555;font-weight:normal;white-space:nowrap;">May</div>
<div class="a" style="left:996px;top:300px;width:10px;height:225px;background:#6200e8"></div>
<div class="a" style="left:1006px;top:372px;width:10px;height:153px;background:#ff8c0f"></div>
<div class="a" style="left:981px;top:546px;width:51px;height:22px;border:1.5px solid #6200e8;border-radius:11px"></div>
<div class="a" style="left:977.5px;top:547.0px;width:60px;text-align:center;line-height:20px;font-size:15px;color:#6200e8;font-weight:normal;white-space:nowrap;-webkit-text-stroke:0.3px #6200e8">June</div>
<div class="a" style="left:1063px;top:440px;width:10px;height:89.5px;background:#6200e8"></div>
<div class="a" style="left:1073px;top:467px;width:10px;height:62.5px;background:#ff8c0f"></div>
<div class="a" style="left:1042.0px;top:546.5px;width:60px;text-align:center;line-height:20px;font-size:15px;color:#555;font-weight:normal;white-space:nowrap;">July</div>
<div class="a" style="left:1116px;top:338px;width:10px;height:191.5px;background:#6200e8"></div>
<div class="a" style="left:1126px;top:408px;width:10px;height:121.5px;background:#ff8c0f"></div>
<div class="a" style="left:1096.0px;top:546.5px;width:60px;text-align:center;line-height:20px;font-size:15px;color:#555;font-weight:normal;white-space:nowrap;">Aug</div>
<div class="a" style="left:1174px;top:440px;width:10px;height:89.5px;background:#6200e8"></div>
<div class="a" style="left:1184px;top:467px;width:10px;height:62.5px;background:#ff8c0f"></div>
<div class="a" style="left:1153.0px;top:546.5px;width:60px;text-align:center;line-height:20px;font-size:15px;color:#555;font-weight:normal;white-space:nowrap;">Sept</div>
<div class="a" style="left:1231px;top:328px;width:10px;height:201.5px;background:#6200e8"></div>
<div class="a" style="left:1241px;top:399px;width:10px;height:130.5px;background:#ff8c0f"></div>
<div class="a" style="left:1210.5px;top:546.5px;width:60px;text-align:center;line-height:20px;font-size:15px;color:#555;font-weight:normal;white-space:nowrap;">Oct</div>
<div class="a" style="left:1285px;top:384px;width:10px;height:145.5px;background:#6200e8"></div>
<div class="a" style="left:1295px;top:446px;width:10px;height:83.5px;background:#ff8c0f"></div>
<div class="a" style="left:1265.0px;top:546.5px;width:60px;text-align:center;line-height:20px;font-size:15px;color:#555;font-weight:normal;white-space:nowrap;">Nov</div>
<div class="a" style="left:1342px;top:440px;width:10px;height:89.5px;background:#6200e8"></div>
<div class="a" style="left:1352px;top:467px;width:10px;height:62.5px;background:#ff8c0f"></div>
<div class="a" style="left:1320.0px;top:546.5px;width:60px;text-align:center;line-height:20px;font-size:15px;color:#555;font-weight:normal;white-space:nowrap;">Dec</div>
<div class="a" style="left:1429px;top:113.5px;line-height:24px;font-size:19.4px;color:#1c1c1c;font-weight:normal;white-space:nowrap;-webkit-text-stroke:0.35px #1c1c1c;letter-spacing:0.25px">Property Overview</div>
<div class="a" style="left:1757px;top:108px;width:95px;height:34px;border:1px solid #d9d9e1;border-radius:4px"></div>
<div class="a" style="left:1767px;top:113.5px;line-height:24px;font-size:15px;color:#444;font-weight:normal;white-space:nowrap;">Yearly</div>
<svg class="a" style="left:1829.5px;top:119px;" width="14" height="12" viewBox="0 0 14 12"><path d="M1.5 3.5 L7 9 L12.5 3.5" fill="none" stroke="#7a7a7a" stroke-width="1.2" stroke-linecap="round"/></svg>
<div class="a" style="left:1409px;top:151px;width:463px;height:1px;background:#ececec"></div>
<svg class="a" style="left:0;top:0" width="1920" height="1129" viewBox="0 0 1920 1129"><circle cx="1641" cy="327" r="88" fill="#f4effd"/><path d="M1576.47 221.70 A123.5 123.5 0 0 0 1566.68 425.63" fill="none" stroke="#6200e8" stroke-width="25" stroke-linecap="round"/><path d="M1760.01 294.00 A123.5 123.5 0 0 0 1606.96 208.28" fill="none" stroke="#ff9f2d" stroke-width="25" stroke-linecap="round"/><path d="M1598.76 443.05 A123.5 123.5 0 0 0 1764.48 324.84" fill="none" stroke="#2fae5a" stroke-width="25" stroke-linecap="round"/></svg>
<div class="a" style="left:1541.0px;top:299.5px;width:200px;text-align:center;line-height:30px;font-size:27px;color:#141a2e;font-weight:bold;white-space:nowrap;">5</div>
<div class="a" style="left:1541.0px;top:335.5px;width:200px;text-align:center;line-height:24px;font-size:17px;color:#555b66;font-weight:normal;white-space:nowrap;">Total Property</div>
<div class="a" style="left:1431px;top:522px;width:44px;height:44px;border-radius:50%;background:linear-gradient(180deg,#efe6fd,#e3d3fb)"></div>
<svg class="a" style="left:1440px;top:531px;" width="26" height="26" viewBox="0 0 22 22"><g fill="none" stroke="#6200e8" stroke-width="1.5" stroke-linecap="round" stroke-linejoin="round"><path d="M2 9.5 L10 2.5 L18 9.5 M4 8 V19 H11.5 M13 4.5 V2.5 H16 V7.2"/><circle cx="10" cy="9.5" r="1.6"/><circle cx="17" cy="17" r="4"/><path d="M17 14.8 V17.2 L18.4 18.2"/></g></svg>
<div class="a" style="left:1485px;top:522.5px;line-height:26px;font-size:20.5px;color:#1c1c1c;font-weight:normal;white-space:nowrap;-webkit-text-stroke:0.45px #1c1c1c">1</div>
<div class="a" style="left:1485px;top:548.0px;line-height:22px;font-size:15.5px;color:#666;font-weight:normal;white-space:nowrap;">Pending</div>
<div class="a" style="left:1577px;top:522px;width:44px;height:44px;border-radius:50%;background:linear-gradient(180deg,#e9f7ee,#dff3e6)"></div>
<svg class="a" style="left:1586px;top:531px;" width="26" height="26" viewBox="0 0 22 22"><g fill="none" stroke="#22a052" stroke-width="1.5" stroke-linecap="round" stroke-linejoin="round"><path d="M1.5 20.5 H20.5 M3.5 20.5 V13 H7 M18.5 20.5 V13 H15 M7 20.5 V5.5 H15 V20.5 M9 5.5 V2.5 H13 V5.5 M9.5 9 H12.5 M9.5 12.5 H12.5 M9.5 16 H12.5 M11 18 V20.5"/></g></svg>
<div class="a" style="left:1631px;top:522.5px;line-height:26px;font-size:20.5px;color:#1c1c1c;font-weight:normal;white-space:nowrap;-webkit-text-stroke:0.45px #1c1c1c">3</div>
<div class="a" style="left:1631px;top:548.0px;line-height:22px;font-size:15.5px;color:#666;font-weight:normal;white-space:nowrap;">Approved</div>
<div class="a" style="left:1736px;top:522px;width:44px;height:44px;border-radius:50%;background:linear-gradient(180deg,#fef1e3,#fde8d3)"></div>
<svg class="a" style="left:1745px;top:531px;" width="26" height="26" viewBox="0 0 22 22"><g fill="none" stroke="#f58a12" stroke-width="1.5" stroke-linecap="round" stroke-linejoin="round"><path d="M1.5 20.5 H11 M3 20.5 V8.5 H7 M7 20.5 V3.5 L13.5 1.5 V10 M9.5 7 H11.5 M9.5 10 H11.5 M4.5 18 V17"/><circle cx="16" cy="16" r="5"/><path d="M13.5 16 H18.5"/></g></svg>
<div class="a" style="left:1790px;top:522.5px;line-height:26px;font-size:20.5px;color:#1c1c1c;font-weight:normal;white-space:nowrap;-webkit-text-stroke:0.45px #1c1c1c">1</div>
<div class="a" style="left:1790px;top:548.0px;line-height:22px;font-size:15.5px;color:#666;font-weight:normal;white-space:nowrap;">Rejected</div>
<div class="a" style="left:350px;top:626.5px;line-height:24px;font-size:19.7px;color:#1c1c1c;font-weight:normal;white-space:nowrap;-webkit-text-stroke:0.3px #1c1c1c">Application Request</div>
<div class="a" style="left:535px;top:627px;width:40px;height:23px;background:#efe6fd;border-radius:12px"></div>
<div class="a" style="left:535.0px;top:628.5px;width:40px;text-align:center;line-height:20px;font-size:15px;color:#6200e8;font-weight:bold;white-space:nowrap;">8</div>
<div class="a" style="left:598px;top:626.5px;line-height:24px;font-size:19.7px;color:#666;font-weight:normal;white-space:nowrap;-webkit-text-stroke:0.25px #666;letter-spacing:-0.1px">Maintenance Request</div>
<div class="a" style="left:795px;top:627px;width:40px;height:23px;background:#f1f1f1;border-radius:12px"></div>
<div class="a" style="left:795.0px;top:628.5px;width:40px;text-align:center;line-height:20px;font-size:15px;color:#555;font-weight:normal;white-space:nowrap;">12</div>
<div class="a" style="left:330px;top:662.5px;width:1522px;height:1px;background:#ececec"></div>
<div class="a" style="left:330px;top:661px;width:247.5px;height:2.5px;background:#6200e8"></div>
<div class="a" style="left:1782px;top:627.0px;line-height:24px;font-size:15.5px;color:#6200e8;font-weight:normal;white-space:nowrap;letter-spacing:-0.25px">View All</div>
<svg class="a" style="left:1839px;top:632px;" width="12" height="14" viewBox="0 0 12 14"><path d="M3.8 2.5 L8.3 7 L3.8 11.5" fill="none" stroke="#6200e8" stroke-width="1.6" stroke-linecap="round" stroke-linejoin="round"/></svg>
<div class="a" style="left:330px;top:680px;width:1522px;height:44px;background:#f7f7f7;border-radius:5px"></div>
<div class="a" style="left:334.0px;top:691.0px;width:60px;text-align:center;line-height:24px;font-size:15.2px;color:#6a6a6a;font-weight:normal;white-space:nowrap;-webkit-text-stroke:0.25px #6a6a6a;letter-spacing:-0.2px">SL.</div>
<div class="a" style="left:409px;top:691.0px;line-height:24px;font-size:15.2px;color:#6a6a6a;font-weight:normal;white-space:nowrap;-webkit-text-stroke:0.25px #6a6a6a;letter-spacing:-0.2px">Date &amp; Time</div>
<div class="a" style="left:627px;top:691.0px;line-height:24px;font-size:15.2px;color:#6a6a6a;font-weight:normal;white-space:nowrap;-webkit-text-stroke:0.25px #6a6a6a;letter-spacing:-0.2px">Tenant Name</div>
<div class="a" style="left:820px;top:691.0px;line-height:24px;font-size:15.2px;color:#6a6a6a;font-weight:normal;white-space:nowrap;-webkit-text-stroke:0.25px #6a6a6a;letter-spacing:-0.2px">Email Address</div>
<div class="a" style="left:1098px;top:691.0px;line-height:24px;font-size:15.2px;color:#6a6a6a;font-weight:normal;white-space:nowrap;-webkit-text-stroke:0.25px #6a6a6a;letter-spacing:-0.2px">Tenant Phone</div>
<div class="a" style="left:1342px;top:691.0px;line-height:24px;font-size:15.2px;color:#6a6a6a;font-weight:normal;white-space:nowrap;-webkit-text-stroke:0.25px #6a6a6a;letter-spacing:-0.2px">Property ID</div>
<div class="a" style="left:1506px;top:691.0px;line-height:24px;font-size:15.2px;color:#6a6a6a;font-weight:normal;white-space:nowrap;-webkit-text-stroke:0.25px #6a6a6a;letter-spacing:-0.2px">Property Name</div>
<div class="a" style="left:1723.0px;top:691.0px;width:100px;text-align:center;line-height:24px;font-size:15.2px;color:#6a6a6a;font-weight:normal;white-space:nowrap;-webkit-text-stroke:0.25px #6a6a6a;letter-spacing:-0.2px">Status</div>
<div class="a" style="left:344.0px;top:740.5px;width:40px;text-align:center;line-height:24px;font-size:16px;color:#2a2a2a;font-weight:normal;white-space:nowrap;">1</div>
<div class="a" style="left:409px;top:740.5px;line-height:24px;font-size:15.8px;color:#2a2a2a;font-weight:normal;white-space:nowrap;letter-spacing:-0.5px">25 Feb, 2025&nbsp; 01:26 PM</div>
<div class="a" style="left:627px;top:740.5px;line-height:24px;font-size:15.8px;color:#2a2a2a;font-weight:normal;white-space:nowrap;letter-spacing:-0.25px">Jenny Wilson</div>
<div class="a" style="left:820px;top:740.5px;line-height:24px;font-size:15.8px;color:#2a2a2a;font-weight:normal;white-space:nowrap;letter-spacing:0.35px">bockelboy@gmail.com</div>
<div class="a" style="left:1098px;top:740.5px;line-height:24px;font-size:15.8px;color:#2a2a2a;font-weight:normal;white-space:nowrap;letter-spacing:-0.25px">(+33)7 35 55 45 43</div>
<div class="a" style="left:1342px;top:740.5px;line-height:24px;font-size:15.8px;color:#2a2a2a;font-weight:normal;white-space:nowrap;letter-spacing:-0.25px">12256</div>
<div class="a" style="left:1504px;top:740.5px;line-height:24px;font-size:15.8px;color:#2a2a2a;font-weight:normal;white-space:nowrap;letter-spacing:-0.25px">Pine House</div>
<div class="a" style="left:1725px;top:738.0px;width:97px;height:27.5px;background:#fff5e9;border:1px solid #fcc68a;border-radius:3px"></div>
<div class="a" style="left:1725.0px;top:741.2px;width:97px;text-align:center;line-height:22px;font-size:16.2px;color:#f7901a;font-weight:normal;white-space:nowrap;-webkit-text-stroke:0.45px #f7901a">Pending</div>
<div class="a" style="left:330px;top:779.0px;width:1522px;height:1px;background:#ebebeb"></div>
<div class="a" style="left:344.0px;top:796.5px;width:40px;text-align:center;line-height:24px;font-size:16px;color:#2a2a2a;font-weight:normal;white-space:nowrap;">2</div>
<div class="a" style="left:409px;top:796.5px;line-height:24px;font-size:15.8px;color:#2a2a2a;font-weight:normal;white-space:nowrap;letter-spacing:-0.5px">20 Feb, 2025&nbsp; 10:30 AM</div>
<div class="a" style="left:627px;top:796.5px;line-height:24px;font-size:15.8px;color:#2a2a2a;font-weight:normal;white-space:nowrap;letter-spacing:-0.25px">Ralph Edwards</div>
<div class="a" style="left:820px;top:796.5px;line-height:24px;font-size:15.8px;color:#2a2a2a;font-weight:normal;white-space:nowrap;letter-spacing:0.35px">csilvers@gmail.com</div>
<div class="a" style="left:1098px;top:796.5px;line-height:24px;font-size:15.8px;color:#2a2a2a;font-weight:normal;white-space:nowrap;letter-spacing:-0.25px">(+33)6 55 58 55 63</div>
<div class="a" style="left:1342px;top:796.5px;line-height:24px;font-size:15.8px;color:#2a2a2a;font-weight:normal;white-space:nowrap;letter-spacing:-0.25px">56321</div>
<div class="a" style="left:1504px;top:796.5px;line-height:24px;font-size:15.8px;color:#2a2a2a;font-weight:normal;white-space:nowrap;letter-spacing:-0.25px">Sunny Valley Casa</div>
<div class="a" style="left:1725px;top:794.0px;width:97px;height:27.5px;background:#e9f8ef;border:1px solid #8fdcae;border-radius:3px"></div>
<div class="a" style="left:1725.0px;top:797.2px;width:97px;text-align:center;line-height:22px;font-size:16.2px;color:#15a34a;font-weight:normal;white-space:nowrap;-webkit-text-stroke:0.45px #15a34a">Approved</div>
<div class="a" style="left:330px;top:835.0px;width:1522px;height:1px;background:#ebebeb"></div>
<div class="a" style="left:344.0px;top:852.5px;width:40px;text-align:center;line-height:24px;font-size:16px;color:#2a2a2a;font-weight:normal;white-space:nowrap;">3</div>
<div class="a" style="left:409px;top:852.5px;line-height:24px;font-size:15.8px;color:#2a2a2a;font-weight:normal;white-space:nowrap;letter-spacing:-0.5px">18 Feb, 2025&nbsp; 11:22 AM</div>
<div class="a" style="left:627px;top:852.5px;line-height:24px;font-size:15.8px;color:#2a2a2a;font-weight:normal;white-space:nowrap;letter-spacing:-0.25px">Savannah Nguyen</div>
<div class="a" style="left:820px;top:852.5px;line-height:24px;font-size:15.8px;color:#2a2a2a;font-weight:normal;white-space:nowrap;letter-spacing:0.35px">ateniese@gmail.com</div>
<div class="a" style="left:1098px;top:852.5px;line-height:24px;font-size:15.8px;color:#2a2a2a;font-weight:normal;white-space:nowrap;letter-spacing:-0.25px">(+33)7 75 55 87 24</div>
<div class="a" style="left:1342px;top:852.5px;line-height:24px;font-size:15.8px;color:#2a2a2a;font-weight:normal;white-space:nowrap;letter-spacing:-0.25px">32654</div>
<div class="a" style="left:1504px;top:852.5px;line-height:24px;font-size:15.8px;color:#2a2a2a;font-weight:normal;white-space:nowrap;letter-spacing:-0.25px">Restful House</div>
<div class="a" style="left:1725px;top:850.0px;width:97px;height:27.5px;background:#ffe9ea;border:1px solid #fba5aa;border-radius:3px"></div>
<div class="a" style="left:1725.0px;top:853.2px;width:97px;text-align:center;line-height:22px;font-size:16.2px;color:#f03a3a;font-weight:normal;white-space:nowrap;-webkit-text-stroke:0.45px #f03a3a">Rejected</div>
<div class="a" style="left:330px;top:891.0px;width:1522px;height:1px;background:#ebebeb"></div>
<div class="a" style="left:344.0px;top:908.5px;width:40px;text-align:center;line-height:24px;font-size:16px;color:#2a2a2a;font-weight:normal;white-space:nowrap;">4</div>
<div class="a" style="left:409px;top:908.5px;line-height:24px;font-size:15.8px;color:#2a2a2a;font-weight:normal;white-space:nowrap;letter-spacing:-0.5px">17 Feb, 2025&nbsp; 09:26 AM</div>
<div class="a" style="left:627px;top:908.5px;line-height:24px;font-size:15.8px;color:#2a2a2a;font-weight:normal;white-space:nowrap;letter-spacing:-0.25px">Annette Black</div>
<div class="a" style="left:820px;top:908.5px;line-height:24px;font-size:15.8px;color:#2a2a2a;font-weight:normal;white-space:nowrap;letter-spacing:0.35px">frostman@gmail.com</div>
<div class="a" style="left:1098px;top:908.5px;line-height:24px;font-size:15.8px;color:#2a2a2a;font-weight:normal;white-space:nowrap;letter-spacing:-0.25px">(+33)7 35 55 31 15</div>
<div class="a" style="left:1342px;top:908.5px;line-height:24px;font-size:15.8px;color:#2a2a2a;font-weight:normal;white-space:nowrap;letter-spacing:-0.25px">96523</div>
<div class="a" style="left:1504px;top:908.5px;line-height:24px;font-size:15.8px;color:#2a2a2a;font-weight:normal;white-space:nowrap;letter-spacing:-0.25px">Mountain Fabric</div>
<div class="a" style="left:1725px;top:906.0px;width:97px;height:27.5px;background:#ebe7fd;border:1px solid #8f7cf3;border-radius:3px"></div>
<div class="a" style="left:1725.0px;top:909.2px;width:97px;text-align:center;line-height:22px;font-size:16.2px;color:#3a12e6;font-weight:normal;white-space:nowrap;-webkit-text-stroke:0.45px #3a12e6">Processing</div>
<div class="a" style="left:330px;top:947.0px;width:1522px;height:1px;background:#ebebeb"></div>
<div class="a" style="left:344.0px;top:964.5px;width:40px;text-align:center;line-height:24px;font-size:16px;color:#2a2a2a;font-weight:normal;white-space:nowrap;">5</div>
<div class="a" style="left:409px;top:964.5px;line-height:24px;font-size:15.8px;color:#2a2a2a;font-weight:normal;white-space:nowrap;letter-spacing:-0.5px">16 Feb, 2025&nbsp; 10:26 AM</div>
<div class="a" style="left:627px;top:964.5px;line-height:24px;font-size:15.8px;color:#2a2a2a;font-weight:normal;white-space:nowrap;letter-spacing:-0.25px">Courtney Henry</div>
<div class="a" style="left:820px;top:964.5px;line-height:24px;font-size:15.8px;color:#2a2a2a;font-weight:normal;white-space:nowrap;letter-spacing:0.35px">doormat@gmail.com</div>
<div class="a" style="left:1098px;top:964.5px;line-height:24px;font-size:15.8px;color:#2a2a2a;font-weight:normal;white-space:nowrap;letter-spacing:-0.25px">(+33)6 55 59 16 45</div>
<div class="a" style="left:1342px;top:964.5px;line-height:24px;font-size:15.8px;color:#2a2a2a;font-weight:normal;white-space:nowrap;letter-spacing:-0.25px">45879</div>
<div class="a" style="left:1504px;top:964.5px;line-height:24px;font-size:15.8px;color:#2a2a2a;font-weight:normal;white-space:nowrap;letter-spacing:-0.25px">Bright Forest Camp</div>
<div class="a" style="left:1725px;top:962.0px;width:97px;height:27.5px;background:#fff5e9;border:1px solid #fcc68a;border-radius:3px"></div>
<div class="a" style="left:1725.0px;top:965.2px;width:97px;text-align:center;line-height:22px;font-size:16.2px;color:#f7901a;font-weight:normal;white-space:nowrap;-webkit-text-stroke:0.45px #f7901a">Pending</div>
<div class="a" style="left:304px;top:1081px;line-height:24px;font-size:14.5px;color:#666;white-space:nowrap;letter-spacing:0.1px">COPYRIGHT © 2025 <span style="color:#1c1c1c">Acnoo</span>, All rights Reserved</div>
<div class="a" style="left:1495px;top:1081px;width:400px;text-align:right;line-height:24px;font-size:14.6px;color:#666;white-space:nowrap;letter-spacing:0.2px">Made by <svg style="display:inline-block;vertical-align:-1px" width="13" height="11" viewBox="0 0 13 11"><path d="M6.5 10.8 L1.3 5.6 C-0.2 4.1 0.1 1.6 1.8 0.7 C3.5 -0.2 5.4 0.6 6.5 2.2 C7.6 0.6 9.5 -0.2 11.2 0.7 C12.9 1.6 13.2 4.1 11.7 5.6 Z" fill="#f00"/></svg> <span style="color:#6200e8">Acnoo</span></div>
</body></html>
